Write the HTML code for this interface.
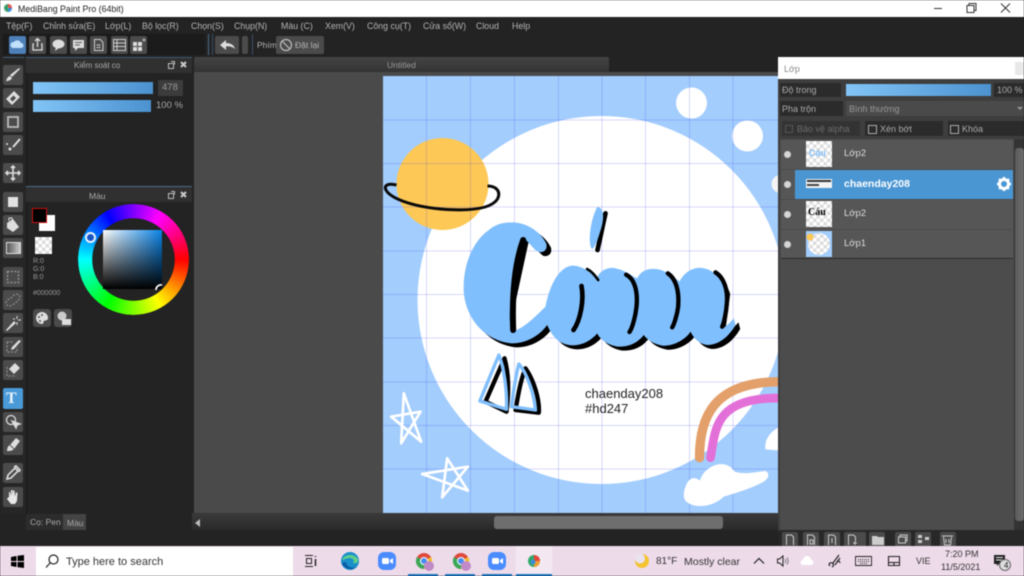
<!DOCTYPE html>
<html><head><meta charset="utf-8"><style>
html,body{margin:0;padding:0;width:1024px;height:576px;overflow:hidden;background:#232323}
#r{position:absolute;left:0;top:0;width:1024px;height:576px;overflow:hidden;font-family:"Liberation Sans","Noto Sans CJK SC",sans-serif;filter:blur(.4px)}
.a{position:absolute}
.t{position:absolute;white-space:nowrap;line-height:12px;font-size:9.5px;color:#b5b5b5}
.m{position:absolute;white-space:nowrap;line-height:12px;font-size:8.8px;color:#b5b5b5;top:19.500px}
.b{position:absolute;left:3px;width:20px;height:20px;background:#4b4b4b;border-radius:2px}
.b svg,.k svg{position:absolute;left:0;top:0}
.k{position:absolute;top:36px;height:18px;width:17px;background:#4b4b4b;border-radius:2px}
.chk{background:conic-gradient(#dcdcdc 25%,#fff 0 50%,#dcdcdc 0 75%,#fff 0) 0 0/7px 7px}
.row{position:absolute;left:781px;width:232px;height:29px;background:#565656}
.sl{background:linear-gradient(90deg,#82c4f6,#4b92d0)}
.pb{position:absolute;top:532px;width:16px;height:14px;background:#4b4b4b;border-radius:2px 2px 0 0}
</style></head><body><div id="r">

<div class="a" style="left:0;top:0;width:1024px;height:17px;background:#fff"></div>
<svg class="a" style="left:1px;top:2px" width="14" height="14"><circle cx="7" cy="6" r="4" fill="#3aa06a"/><path d="M7 2a4 4 0 0 1 4 4H7z" fill="#e55"/><path d="M7 6h4a4 4 0 0 1-4 4z" fill="#3b8fd8"/></svg>
<div class="t" style="left:18px;top:3px;font-size:8.800px;color:#222">MediBang Paint Pro (64bit)</div>
<svg class="a" style="left:930px;top:0" width="94" height="17" fill="none" stroke="#333"><path d="M4 8.500h8"/><path d="M37 5.500h7v7h-7zM39 5.500v-2h7v7h-2"/><path d="M71 3.500l9 9M80 3.500l-9 9"/></svg>

<div class="m" style="left:6px">Tệp(F)</div>
<div class="m" style="left:43px">Chỉnh sửa(E)</div>
<div class="m" style="left:105px">Lớp(L)</div>
<div class="m" style="left:142px">Bộ lọc(R)</div>
<div class="m" style="left:191px">Chọn(S)</div>
<div class="m" style="left:234px">Chụp(N)</div>
<div class="m" style="left:281px">Màu (C)</div>
<div class="m" style="left:325px">Xem(V)</div>
<div class="m" style="left:367px">Công cụ(T)</div>
<div class="m" style="left:423px">Cửa sổ(W)</div>
<div class="m" style="left:476px">Cloud</div>
<div class="m" style="left:512px">Help</div>

<div class="a" style="left:3px;top:34px;width:202px;height:21px;background:#1b1b1b"></div>
<div class="a" style="left:208px;top:34px;width:1px;height:21px;background:#4a6a8a"></div>
<div class="k" style="left:9px;background:#4d80b8"><svg width="17" height="18"><path d="M4 12a3 3 0 0 1 1-6 4 4 0 0 1 7 1 2.500 2.500 0 0 1 0 5z" fill="#bfe0fa"/></svg></div>
<div class="k" style="left:29px"><svg width="17" height="18" fill="none" stroke="#ddd" stroke-width="1.300"><path d="M5 8H4v6h9V8h-1M8.500 11V3M6 5l2.500-2.500L11 5"/></svg></div>
<div class="k" style="left:50px"><svg width="17" height="18"><ellipse cx="8.500" cy="8" rx="6" ry="4.500" fill="#ddd"/><path d="M6 11l-1 4 4-3z" fill="#ddd"/></svg></div>
<div class="k" style="left:70px"><svg width="17" height="18"><path d="M3 4h11v8H8l-3 3v-3H3z" fill="#ddd"/><path d="M5 6.500h7M5 9h5" stroke="#555"/></svg></div>
<div class="k" style="left:90px"><svg width="17" height="18" fill="none" stroke="#ccc"><path d="M4.500 3.500h6l2.500 3v8h-8.500z"/><path d="M6.500 9h4M6.500 11.500h4"/></svg></div>
<div class="k" style="left:111px"><svg width="17" height="18" fill="none" stroke="#ccc"><path d="M2.500 3.500h12v11h-12zM2.500 7h12M2.500 10.500h12M6 3.500v11"/></svg></div>
<div class="k" style="left:130px"><svg width="17" height="18"><path d="M3 6h4v4H3zM8 6h4v4H8zM3 11h4v4H3zM8 11h4v4H8z" fill="#ddd"/><circle cx="14" cy="4" r="1.500" fill="#aaa"/></svg></div>

<div class="a" style="left:212px;top:34px;width:1px;height:21px;background:#3a5068"></div>
<div class="a" style="left:215px;top:36px;width:24px;height:18px;background:#4b4b4b;border-radius:2px"></div>
<svg class="a" style="left:215px;top:36px" width="24" height="18"><path d="M5 9l6-5v3c5 0 8 2 9 6-2-2-5-3-9-2.500V14z" fill="#ddd"/></svg>
<div class="a" style="left:242px;top:36px;width:6px;height:18px;background:#4b4b4b;border-radius:2px"></div>
<div class="a" style="left:252px;top:34px;width:1px;height:21px;background:#3a5068"></div>
<div class="t" style="left:257px;top:39px;font-size:8.500px">Phím</div>
<div class="a" style="left:276px;top:36px;width:48px;height:18px;background:#4b4b4b;border-radius:2px"></div>
<svg class="a" style="left:278px;top:37px" width="16" height="16" fill="none" stroke="#bbb" stroke-width="1.200"><circle cx="8" cy="8" r="5.500"/><path d="M4 4l8 8"/></svg>
<div class="t" style="left:295px;top:39px;font-size:8.500px">Đặt lại</div>

<div class="a" style="left:0;top:56px;width:26px;height:458px;background:#262626;border-right:1px solid #1b1b1b"></div>
<div class="a" style="left:3px;top:57px;width:21px;height:1px;background:#3f5a73"></div>
<div class="a" style="left:26px;top:57px;width:166px;height:1px;background:#3f5a73"></div>
<div class="a" style="left:26px;top:58px;width:166px;height:15px;background:#303030"></div>
<div class="t" style="left:74px;top:60px;font-size:8px;color:#aaa">Kiểm soát cọ</div>
<svg class="a" style="left:166px;top:59px" width="24" height="12" fill="none" stroke="#bbb"><path d="M2.500 4.500h5v5h-5zM5 2.500h3.500v3"/><path d="M15 3l5 5M20 3l-5 5" stroke="#ccc" stroke-width="2"/></svg>
<div class="a sl" style="left:33px;top:82px;width:120px;height:12px"></div>
<div class="a sl" style="left:33px;top:100px;width:118px;height:12px"></div>
<div class="a" style="left:158px;top:80px;width:25px;height:16px;background:#3c3c3c"></div>
<div class="t" style="left:162px;top:82px;color:#999">478</div>
<div class="t" style="left:156px;top:100px;color:#aaa">100 %</div>

<div class="a" style="left:26px;top:186px;width:166px;height:1px;background:#4d6c8a"></div>
<div class="a" style="left:26px;top:187px;width:166px;height:15px;background:#303030"></div>
<div class="t" style="left:89px;top:190px;font-size:8.500px;color:#aaa">Màu</div>
<svg class="a" style="left:166px;top:189px" width="24" height="12" fill="none" stroke="#bbb"><path d="M2.500 4.500h5v5h-5zM5 2.500h3.500v3"/><path d="M15 3l5 5M20 3l-5 5" stroke="#ccc" stroke-width="2"/></svg>
<div class="a" style="left:39px;top:215px;width:16px;height:16px;background:#fff"></div>
<div class="a" style="left:32px;top:208px;width:13px;height:13px;background:#000;border:1.500px solid #c8100f"></div>
<div class="a chk" style="left:35px;top:237px;width:17px;height:17px"></div>
<div class="t" style="left:33px;top:258px;font-size:7px;color:#999;line-height:8px">R:0<br>G:0<br>B:0</div>
<div class="t" style="left:33px;top:288px;font-size:7px;color:#999">#000000</div>
<div class="a" style="left:33px;top:309px;width:18px;height:18px;background:#4b4b4b;border-radius:3px"></div>
<svg class="a" style="left:33px;top:309px" width="18" height="18"><path d="M9 3a6 6 0 1 0 0 12c2 0 1-2 2-3s4 0 4-3a6 6 0 0 0-6-6z" fill="#ddd"/><circle cx="6" cy="8" r="1" fill="#555"/><circle cx="9" cy="6" r="1" fill="#555"/><circle cx="7" cy="12" r="1" fill="#555"/></svg>
<div class="a" style="left:54px;top:309px;width:18px;height:18px;background:#4b4b4b;border-radius:3px"></div>
<svg class="a" style="left:54px;top:309px" width="18" height="18"><circle cx="8" cy="7" r="4.500" fill="#ccc"/><rect x="8" y="10" width="9" height="6" fill="#ddd"/></svg>
<div class="a" style="left:77.500px;top:204px;width:111px;height:111px;border-radius:50%;background:conic-gradient(#8000ff,#ff00ff 30deg,#ff0080 60deg,#f00 90deg,#ff8000 120deg,#ff0 150deg,#80ff00 180deg,#0f0 210deg,#00ff80 240deg,#0ff 270deg,#0080ff 300deg,#00f 330deg,#8000ff);-webkit-mask:radial-gradient(circle,transparent 41px,#000 41.500px);mask:radial-gradient(circle,transparent 41px,#000 41.500px)"></div>
<div class="a" style="left:103px;top:230px;width:59px;height:59px;background:linear-gradient(transparent,#000),linear-gradient(90deg,#fff,#0a84e8)"></div>
<div class="a" style="left:85px;top:232px;width:7px;height:7px;border:2px solid #e8f4ff;border-radius:50%;background:#1a55c8"></div>
<svg class="a" style="left:154px;top:282px" width="10" height="10" fill="none" stroke="#fff" stroke-width="1.800"><path d="M2 8a5 5 0 0 1 6-5"/></svg>

<div class="b" style="top:65px"><svg width="20" height="20"><path d="M16 3l1 1-8 8-2-2z" fill="#ddd"/><path d="M7 11l2 2c-1 2-3 3-6 3 1-2 1-4 4-5z" fill="#ddd"/></svg></div>
<div class="b" style="top:88px"><svg width="20" height="20"><path d="M11 3l6 6-8 8-6-6z" fill="#ddd"/><path d="M7 11l3.500-3.500 2.500 2.500L9.500 13.500z" fill="#4b4b4b"/></svg></div>
<div class="b" style="top:112px"><svg width="20" height="20" fill="none" stroke="#bbb" stroke-width="1.800"><path d="M5 5h10v10H5z"/></svg></div>
<div class="b" style="top:135px"><svg width="20" height="20" fill="none" stroke="#ddd" stroke-width="2"><path d="M17 4L10 12"/><circle cx="4" cy="9" r="1" fill="#ddd" stroke="none"/><circle cx="7" cy="14" r="1.500" fill="#ddd" stroke="none"/></svg></div>
<div class="b" style="top:163px"><svg width="20" height="20" fill="none" stroke="#ddd" stroke-width="1.600"><path d="M10 3v14M3 10h14"/><path d="M8 5l2-2 2 2M8 15l2 2 2-2M5 8l-2 2 2 2M15 8l2 2-2 2"/></svg></div>
<div class="b" style="top:192px"><svg width="20" height="20"><rect x="5" y="5" width="10" height="10" fill="#e2e2e2"/></svg></div>
<div class="b" style="top:215px"><svg width="20" height="20"><path d="M4 8l6-4 6 8-6 5-6-4z" fill="#ddd"/><path d="M6 6V3h3v2" fill="none" stroke="#ddd"/></svg></div>
<div class="b" style="top:238px"><svg width="20" height="20"><rect x="3" y="4" width="15" height="12" fill="#ddd"/><linearGradient id="g"><stop offset="0" stop-color="#555"/><stop offset="1" stop-color="#ccc"/></linearGradient><rect x="4" y="5" width="13" height="10" fill="url(#g)"/></svg></div>
<div class="b" style="top:267px"><svg width="20" height="20" fill="none" stroke="#999" stroke-width="1.300" stroke-dasharray="2 1.500"><path d="M4.500 4.500h11v11h-11z"/></svg></div>
<div class="b" style="top:290px"><svg width="20" height="20" fill="none" stroke="#888" stroke-width="1.300" stroke-dasharray="2 1.500"><path d="M3 13c0-4 5-4 7-7s7-2 7 1-4 5-6 7-8 3-8-1z"/></svg></div>
<div class="b" style="top:313px"><svg width="20" height="20"><path d="M3 17l8-9 2 2-9 8z" fill="#ddd"/><path d="M14 3v3M14 9v3M10 6h2M15 7h3" stroke="#ddd"/></svg></div>
<div class="b" style="top:337px"><svg width="20" height="20"><path d="M4 5h6M4 5v10h10v-5M4 15" fill="none" stroke="#999" stroke-dasharray="2 1.500"/><path d="M16 3l2 1-7 8-3 1 1-3z" fill="#ddd"/></svg></div>
<div class="b" style="top:360px"><svg width="20" height="20"><path d="M4 7v9h9" fill="none" stroke="#999" stroke-dasharray="2 1.500"/><path d="M12 3l5 5-6 6-5-5z" fill="#ddd"/></svg></div>
<div class="a" style="left:3px;top:388px;width:20px;height:21px;background:#4a9ad8;border-radius:2px"></div>
<div class="t" style="left:6px;top:392px;font:bold 16px/14px 'Liberation Serif',serif;color:#e8f2fb">T</div>
<div class="b" style="top:412px"><svg width="20" height="20" fill="none" stroke="#ddd" stroke-width="1.300"><circle cx="8" cy="8" r="4.500"/><path d="M9 9l8 3-3 1-1 3z" fill="#ddd"/></svg></div>
<div class="b" style="top:435px"><svg width="20" height="20"><path d="M4 16c0-3 1-5 3-6l6-7 4 3-6 8c-2 2-4 2-7 2z" fill="#ddd"/><path d="M7 10l4 4" stroke="#555"/></svg></div>
<div class="b" style="top:463px"><svg width="20" height="20" fill="none" stroke="#ddd" stroke-width="1.600"><path d="M4 16l1-4 7-7 3 3-7 7z"/><path d="M11 4l2-1 4 4-1 2"/></svg></div>
<div class="b" style="top:487px"><svg width="20" height="20"><path d="M6 10V5h1l1 4V3h1.500l.5 6V3.500h1.500l.5 6 1-4h1.500L14 14l-2 3H8l-4-5 .5-1z" fill="#e8e8e8"/></svg></div>

<div class="a" style="left:26px;top:514px;width:37px;height:16px;background:#2c2c2c"></div>
<div class="t" style="left:30px;top:516px;font-size:8.500px;color:#aaa">Cọ: Pen</div>
<div class="a" style="left:63px;top:514px;width:23px;height:16px;background:#444"></div>
<div class="t" style="left:67px;top:517px;font-size:8.500px;color:#aaa">Màu</div>

<div class="a" style="left:194px;top:57px;width:415px;height:15px;background:linear-gradient(#444,#333);border-radius:2px 2px 0 0"></div>
<div class="a" style="left:609px;top:57px;width:170px;height:17px;background:#232323"></div>
<div class="t" style="left:387px;top:59px;font-size:8.500px;color:#999">Untitled</div>
<div class="a" style="left:194px;top:72px;width:585px;height:441px;background:#4a4a4a"></div>
<div class="a" style="left:192px;top:513px;width:587px;height:17px;background:linear-gradient(#3a3a3a,#2a2a2a)"></div>
<div class="a" style="left:195px;top:519px;border:4px solid transparent;border-right:5px solid #bbb;border-left:0"></div>
<div class="a" style="left:494px;top:516px;width:229px;height:13px;background:#6e6e6e;border-radius:3px"></div>

<svg class="a" style="left:382.500px;top:76px" width="396" height="437" viewBox="382.500 76 396 437">
<rect x="382" y="76" width="397" height="437" fill="#a3cdfd"/>
<circle cx="601" cy="300" r="184" fill="#fff"/>
<circle cx="691" cy="103" r="15.500" fill="#fff"/><circle cx="747" cy="136" r="15.500" fill="#fff"/><circle cx="780" cy="184" r="9" fill="#f3f3f3"/>
<circle cx="442" cy="184" r="46" fill="#fdc855"/>
<g fill="none" stroke="rgba(60,60,235,.2)" stroke-width="1">
<path d="M426 76v437M470 76v437M514 76v437M558 76v437M601.500 76v437M645 76v437M689 76v437M732.500 76v437"/>
<path d="M382 120h397M382 163.500h397M382 207h397M382 251h397M382 294.500h397M382 338h397M382 382h397M382 425.500h397M382 469h397"/>
</g>
<path d="M396 185C388 183 384 185 385 189C388 197 408 206 440 209C465 211 490 210 497 199C501 191 495 186 487 186" fill="none" stroke="#0a0a0a" stroke-width="3"/>

<g transform="translate(455 200) scale(.33333)">
<path transform="translate(14 12)" fill="#000" d="M170 67C215 68 255 95 272 130C278 150 262 160 248 155L205 115L165 300L168 395C200 390 240 350 270 320C285 240 320 195 355 197C385 200 410 220 425 232C435 210 460 200 480 205C510 210 530 230 545 235C560 205 590 205 610 208C640 215 660 235 672 245C690 210 720 200 745 205C775 210 800 235 810 270L795 385C810 385 825 365 835 355L840 375C820 410 790 435 755 435C730 432 715 415 705 395C690 420 650 440 620 437C595 432 575 420 565 405C545 430 520 440 490 440C460 437 435 420 425 400C405 425 370 440 340 435C310 430 290 410 275 375C250 410 210 430 170 430C100 425 35 370 25 280C20 200 50 125 100 90C120 72 145 67 170 67Z"/>
<path fill="#80bffd" d="M170 67C215 68 255 95 272 130C278 150 262 160 248 155C235 150 220 125 205 115C190 135 172 220 165 300C162 340 162 380 168 395C200 390 240 350 270 320C285 240 320 195 355 197C385 200 410 220 425 232C435 210 460 200 480 205C510 210 530 230 545 235C560 205 590 205 610 208C640 215 660 235 672 245C690 210 720 200 745 205C775 210 800 235 810 270C815 320 800 360 795 385C810 385 825 365 835 355L840 375C820 410 790 435 755 435C730 432 715 415 705 395C690 420 650 440 620 437C595 432 575 420 565 405C545 430 520 440 490 440C460 437 435 420 425 400C405 425 370 440 340 435C310 430 290 410 275 375C250 410 210 430 170 430C100 425 35 370 25 280C20 200 50 125 100 90C120 72 145 67 170 67Z"/>
<g fill="none" stroke="#000" stroke-linecap="round">
<path stroke-width="18" d="M203 120C185 170 168 250 173 390"/>
<path stroke-width="8" d="M395 207C410 215 420 228 428 240"/>
<path stroke-width="14" d="M378 258C386 300 375 360 354 390"/>
<path stroke-width="13" d="M512 224C535 235 548 270 543 320C540 350 530 385 522 396"/>
<path stroke-width="13" d="M637 220C660 235 672 270 668 320C665 345 655 375 650 382"/>
<path stroke-width="13" d="M780 217C805 232 818 270 814 310C812 340 805 370 800 380"/>
<path stroke-width="14" d="M450 40C443 70 435 110 426 150"/>
</g>
<path fill="#80bffd" d="M425 21C445 22 447 50 437 85C428 115 420 140 410 147C398 140 400 70 425 21Z"/>
</g>

<g transform="translate(380 290) scale(.33333)" fill="none" stroke-linejoin="round" stroke-linecap="round">
<path d="M372 205L315 335L378 365C385 310 385 250 372 205Z" stroke="#000" stroke-width="13"/>
<path d="M355 195L298 333L378 358C380 300 370 230 355 195Z" stroke="#80bffd" stroke-width="10"/>
<path d="M435 235C420 270 412 320 405 360L475 368C478 330 460 270 435 235Z" stroke="#000" stroke-width="13"/>
<path d="M415 222C405 260 398 310 393 350L465 360C460 310 440 250 415 222Z" stroke="#80bffd" stroke-width="10"/>
<path d="M70 310L62 460L120 365L32 380L122 455Z" stroke="#fff" stroke-width="8"/>
<path d="M200 505L185 622L262 530L125 552L262 602Z" stroke="#fff" stroke-width="8"/>
<path d="M957 503C957 380 1000 275 1200 275" stroke="#e3a06b" stroke-width="28"/>
<path d="M990 503C1005 420 1000 322 1200 324" stroke="#e36fd9" stroke-width="26"/>
<path stroke="none" fill="#fff" d="M915 590C925 560 945 560 958 572C975 520 1040 505 1062 545C1090 555 1130 545 1155 543C1170 550 1165 570 1140 580C1100 600 1060 610 1030 620C1000 650 950 655 925 640C905 630 908 610 915 590Z"/>
<path stroke="none" fill="#fff" d="M1155 478C1150 445 1175 420 1200 410V482Z"/>
</g>
<text x="584.500" y="398" font-family="Liberation Sans" font-size="13" fill="#222">chaenday208</text>
<text x="584.500" y="413" font-family="Liberation Sans" font-size="13" fill="#222">#hd247</text>
</svg>

<div class="a" style="left:778px;top:79px;width:246px;height:452px;background:#3e3e3e"></div>
<div class="a" style="left:778px;top:57px;width:246px;height:22px;background:#fff"></div>
<div class="t" style="left:784px;top:63px;font-size:9px;color:#888">Lớp</div>
<div class="a" style="left:1015px;top:62px;width:9px;height:13px;background:#e8e8e8"></div>
<div class="a" style="left:780px;top:83px;width:61px;height:14px;background:#2b2b2b"></div>
<div class="t" style="left:782px;top:84px;color:#aaa;font-size:9px">Độ trong</div>
<div class="a sl" style="left:846px;top:84px;width:145px;height:12px"></div>
<div class="a" style="left:994px;top:83px;width:30px;height:14px;background:#2b2b2b"></div>
<div class="t" style="left:997px;top:84px;color:#aaa;font-size:9px">100 %</div>
<div class="a" style="left:780px;top:101px;width:63px;height:15px;background:#2b2b2b"></div>
<div class="t" style="left:782px;top:103px;color:#aaa;font-size:9px">Pha trộn</div>
<div class="a" style="left:846px;top:101px;width:178px;height:15px;background:#4a4a4a"></div>
<div class="t" style="left:849px;top:103px;color:#999;font-size:9px">Bình thường</div>
<div class="a" style="left:1017px;top:107px;border:3px solid transparent;border-top:3px solid #999"></div>
<div class="a" style="left:782px;top:121px;width:78px;height:15px;background:#333"></div>
<div class="a" style="left:785px;top:125px;width:6px;height:6px;border:1px solid #555"></div>
<div class="t" style="left:797px;top:123px;color:#6c6c6c;font-size:9px">Bảo vệ alpha</div>
<div class="a" style="left:865px;top:121px;width:78px;height:15px;background:#2b2b2b"></div>
<div class="a" style="left:868px;top:125px;width:6.500px;height:6.500px;border:1px solid #aaa"></div>
<div class="t" style="left:880px;top:123px;color:#aaa;font-size:9px">Xén bớt</div>
<div class="a" style="left:948px;top:121px;width:76px;height:15px;background:#2b2b2b"></div>
<div class="a" style="left:950px;top:125px;width:6.500px;height:6.500px;border:1px solid #aaa"></div>
<div class="t" style="left:962px;top:123px;color:#aaa;font-size:9px">Khóa</div>

<div class="a" style="left:780px;top:139px;width:234px;height:392px;background:#4c4c4c"></div>
<div class="row" style="top:140px"></div>
<div class="row" style="top:170px"></div>
<div class="a" style="left:795px;top:170px;width:218px;height:29px;background:#4a96d3"></div>
<div class="row" style="top:200px"></div>
<div class="row" style="top:230px;height:28px"></div>
<div class="a" style="left:781px;top:258px;width:232px;height:1px;background:#2a2a2a"></div>
<div class="a" style="left:783.500px;top:150.500px;width:7px;height:7px;border-radius:50%;background:#d5d5d5"></div>
<div class="a" style="left:783.500px;top:180.500px;width:7px;height:7px;border-radius:50%;background:#d5d5d5"></div>
<div class="a" style="left:783.500px;top:210.500px;width:7px;height:7px;border-radius:50%;background:#d5d5d5"></div>
<div class="a" style="left:783.500px;top:240.500px;width:7px;height:7px;border-radius:50%;background:#d5d5d5"></div>
<div class="a chk" style="left:806px;top:141px;width:26px;height:26px"></div>
<div class="t" style="left:809px;top:148px;font:bold 9px/10px 'Liberation Sans';color:#80bffd">Cáu</div>
<div class="a" style="left:806px;top:179px;width:26px;height:9px;background:#f4f4f4"></div>
<div class="a" style="left:807px;top:180px;width:24px;height:2px;background:#333"></div>
<div class="a" style="left:807px;top:184px;width:12px;height:2px;background:#444"></div>
<div class="a chk" style="left:806px;top:201px;width:26px;height:26px"></div>
<div class="t" style="left:808px;top:208px;font:bold 10px/10px 'Liberation Serif';color:#000">Cáu</div>
<div class="a chk" style="left:806px;top:231px;width:26px;height:26px"></div>
<svg class="a" style="left:806px;top:231px" width="26" height="26"><path d="M0 0H26V26H0ZM13 2A11 11 0 1 0 13 24A11 11 0 1 0 13 2Z" fill="#a3cdfd" fill-rule="evenodd"/><circle cx="4" cy="6" r="3.500" fill="#fdc855"/></svg>
<div class="t" style="left:844px;top:148px;color:#ddd;font-size:9.500px">Lớp2</div>
<div class="t" style="left:844px;top:178px;color:#fff;font:bold 10.500px/12px 'Liberation Sans'">chaenday208</div>
<div class="t" style="left:844px;top:208px;color:#ddd;font-size:9.500px">Lớp2</div>
<div class="t" style="left:844px;top:238px;color:#ddd;font-size:9.500px">Lớp1</div>
<svg class="a" style="left:996px;top:176px" width="16" height="16"><circle cx="8" cy="8" r="4.500" fill="none" stroke="#fff" stroke-width="3"/><path d="M8 1v14M1 8h14M3 3l10 10M13 3L3 13" stroke="#fff" stroke-width="2.500" stroke-dasharray="2.500 9 2.500"/></svg>
<div class="a" style="left:1014px;top:139px;width:10px;height:392px;background:#333"></div>
<div class="a" style="left:1015px;top:148px;width:9px;height:373px;background:linear-gradient(90deg,#5a5a5a,#6e6e6e);border-radius:3px"></div>
<div class="a" style="left:779px;top:530px;width:245px;height:16px;background:#282828"></div>
<div class="pb" style="left:782px"></div><div class="pb" style="left:803px"></div><div class="pb" style="left:824px"></div><div class="pb" style="left:844px;width:22px"></div><div class="pb" style="left:869px"></div><div class="pb" style="left:895px"></div><div class="pb" style="left:915px"></div><div class="pb" style="left:940px"></div>
<svg class="a" style="left:782px;top:532px" width="180" height="14" fill="none" stroke="#ccc"><path d="M4.500 13v-10h5l2 2v8"/><path d="M25.500 13v-10h5l2 2v8M28 8h3v4h-3z"/><path d="M46.500 13v-10h5l2 2v8M50 11V6"/><path d="M66.500 13v-10h5l2 2v4M71 11h4M73 9v4"/><path d="M90 4h5l1 1h6v8H90z" fill="#ccc" stroke="none"/><path d="M116.500 11V5h7v6zM118 5V3h7v6h-2"/><path d="M136 3h4v3h-4zM136 8h4v3h-4zM143 5h4v3h-4z" fill="#ccc" stroke="none"/><path d="M161.500 5l1 8h6l1-8M160 4h11M164 7v4M167 7v4"/></svg>

<div class="a" style="left:0;top:546px;width:1024px;height:30px;background:#eedbea"></div>
<svg class="a" style="left:11px;top:555px" width="13" height="13"><path d="M0 2l5.500-1v5H0zM6.500 .800L13 0v6H6.500zM0 7h5.500v5L0 11zM6.500 7H13v6l-6.500-.900z" fill="#000"/></svg>
<div class="a" style="left:36px;top:547px;width:257px;height:29px;background:#fff"></div>
<svg class="a" style="left:44px;top:553px" width="16" height="16" fill="none" stroke="#222" stroke-width="1.200"><circle cx="9.500" cy="6.500" r="4.500"/><path d="M6 10l-4 4.500"/></svg>
<div class="t" style="left:66px;top:556px;font-size:11px;color:#333">Type here to search</div>
<svg class="a" style="left:304px;top:554px" width="14" height="14" fill="none" stroke="#222"><path d="M1 1.500h8M1 12.500h8M2.500 4.500h5v5h-5z"/><path d="M11.500 2v1M11.500 5v7" stroke-width="1.500"/></svg>
<svg class="a" style="left:340px;top:551px" width="20" height="20"><circle cx="10" cy="10" r="9" fill="#1a8fc9"/><path d="M2 9C4 3 14 2 18 8c1 3-2 5-5 4 2-2 0-5-3-5-4 0-7 2-8 2z" fill="#5fcf8a"/><path d="M6 11c0 4 5 7 10 5-4 4-12 2-14-4z" fill="#0d5aa7"/></svg>
<div class="a" style="left:378px;top:552px;width:18px;height:18px;border-radius:6px;background:#4a8cff"></div>
<svg class="a" style="left:378px;top:552px" width="18" height="18"><rect x="4" y="6" width="7" height="6" rx="1.500" fill="#fff"/><path d="M12 8l3-2v6l-3-2z" fill="#fff"/></svg>
<svg class="a" style="left:415px;top:552px" width="20" height="20"><circle cx="9" cy="9" r="8" fill="#de4a3c"/><path d="M9 9L16 5A8 8 0 0 1 9 17z" fill="#f3bd2e"/><path d="M9 9v8A8 8 0 0 1 2 5z" fill="#3aa757"/><circle cx="9" cy="9" r="3.500" fill="#4a8cf0" stroke="#fff"/><circle cx="14" cy="14" r="5" fill="#c08ac8"/></svg>
<svg class="a" style="left:452px;top:552px" width="20" height="20"><circle cx="9" cy="9" r="8" fill="#de4a3c"/><path d="M9 9L16 5A8 8 0 0 1 9 17z" fill="#f3bd2e"/><path d="M9 9v8A8 8 0 0 1 2 5z" fill="#3aa757"/><circle cx="9" cy="9" r="3.500" fill="#4a8cf0" stroke="#fff"/><circle cx="14" cy="14" r="5" fill="#c08ac8"/></svg>
<div class="a" style="left:488px;top:552px;width:18px;height:18px;border-radius:6px;background:#4a8cff"></div>
<svg class="a" style="left:488px;top:552px" width="18" height="18"><rect x="4" y="6" width="7" height="6" rx="1.500" fill="#fff"/><path d="M12 8l3-2v6l-3-2z" fill="#fff"/></svg>
<div class="a" style="left:516px;top:546px;width:36px;height:30px;background:#f3e8f1"></div>
<svg class="a" style="left:526px;top:553px" width="16" height="16"><circle cx="8" cy="8" r="6" fill="#33a868"/><path d="M8 2a6 6 0 0 1 6 6H8z" fill="#e8473c"/><path d="M8 8h6a6 6 0 0 1-6 6z" fill="#f0a030"/><circle cx="7" cy="9" r="2.500" fill="#3b8fd8"/></svg>
<div class="a" style="left:408px;top:574px;width:30px;height:2px;background:#1d78c4"></div>
<div class="a" style="left:445px;top:574px;width:30px;height:2px;background:#1d78c4"></div>
<div class="a" style="left:482px;top:574px;width:30px;height:2px;background:#1d78c4"></div>
<div class="a" style="left:516px;top:574px;width:36px;height:2px;background:#1d78c4"></div>

<svg class="a" style="left:634px;top:553px" width="16" height="16"><circle cx="8" cy="8" r="7" fill="#f4c430"/><circle cx="6" cy="5.500" r="5" fill="#e8e3ee"/></svg>
<div class="t" style="left:656px;top:556px;font-size:10px;color:#333">81°F</div>
<div class="t" style="left:684px;top:556px;font-size:10.500px;color:#333">Mostly clear</div>
<svg class="a" style="left:752px;top:555px" width="14" height="12" fill="none" stroke="#222" stroke-width="1.200"><path d="M2 8.500l5-5 5 5"/></svg>
<svg class="a" style="left:776px;top:554px" width="14" height="14" fill="none" stroke="#222"><path d="M1.500 5v4h2l3.500 3V2L3.500 5z"/><path d="M9 5c1 1 1 3 0 4M11 3.500c1.500 2 1.500 5 0 7" stroke="#777"/></svg>
<svg class="a" style="left:800px;top:556px" width="14" height="10"><path d="M3 9a2.500 2.500 0 0 1 0-5 4 4 0 0 1 8 0 2.500 2.500 0 0 1 0 5z" fill="#fff"/></svg>
<svg class="a" style="left:827px;top:553px" width="16" height="16" fill="none" stroke="#222" stroke-width="1.200"><path d="M3 13c-2-2 0-4 2-3s2 3 0 4M6 10l6-8M8 12l5-7M10 8c2 0 3 1 3 2"/></svg>
<svg class="a" style="left:855px;top:555px" width="18" height="12" fill="none" stroke="#222" stroke-width=".9"><path d="M.500 1.500h16v9H.500z"/><path d="M3 4.500h11M3 6.500h11M5 8.500h7" stroke-dasharray="1 1"/></svg>
<svg class="a" style="left:887px;top:555px" width="14" height="12" fill="none" stroke="#222" stroke-width="1.100"><path d="M1.500 1.500h11v9h-11zM1.500 7.500h11M7 7.500v3"/></svg>
<div class="t" style="left:916px;top:555px;font-size:9px;color:#333">VIE</div>
<div class="t" style="left:945px;top:548px;font-size:9px;color:#333">7:20 PM</div>
<div class="t" style="left:941px;top:561px;font-size:9px;color:#333">11/5/2021</div>
<svg class="a" style="left:993px;top:554px" width="22" height="20"><path d="M1 1h11v9H6l-2 2v-2H1z" fill="#222"/><path d="M3 3.500h7M3 6h7" stroke="#eee"/><circle cx="12" cy="11" r="5.500" fill="#ddd" stroke="#666"/></svg>
<div class="t" style="left:1004px;top:560px;font-size:8px;color:#222">4</div>
</div></body></html>
